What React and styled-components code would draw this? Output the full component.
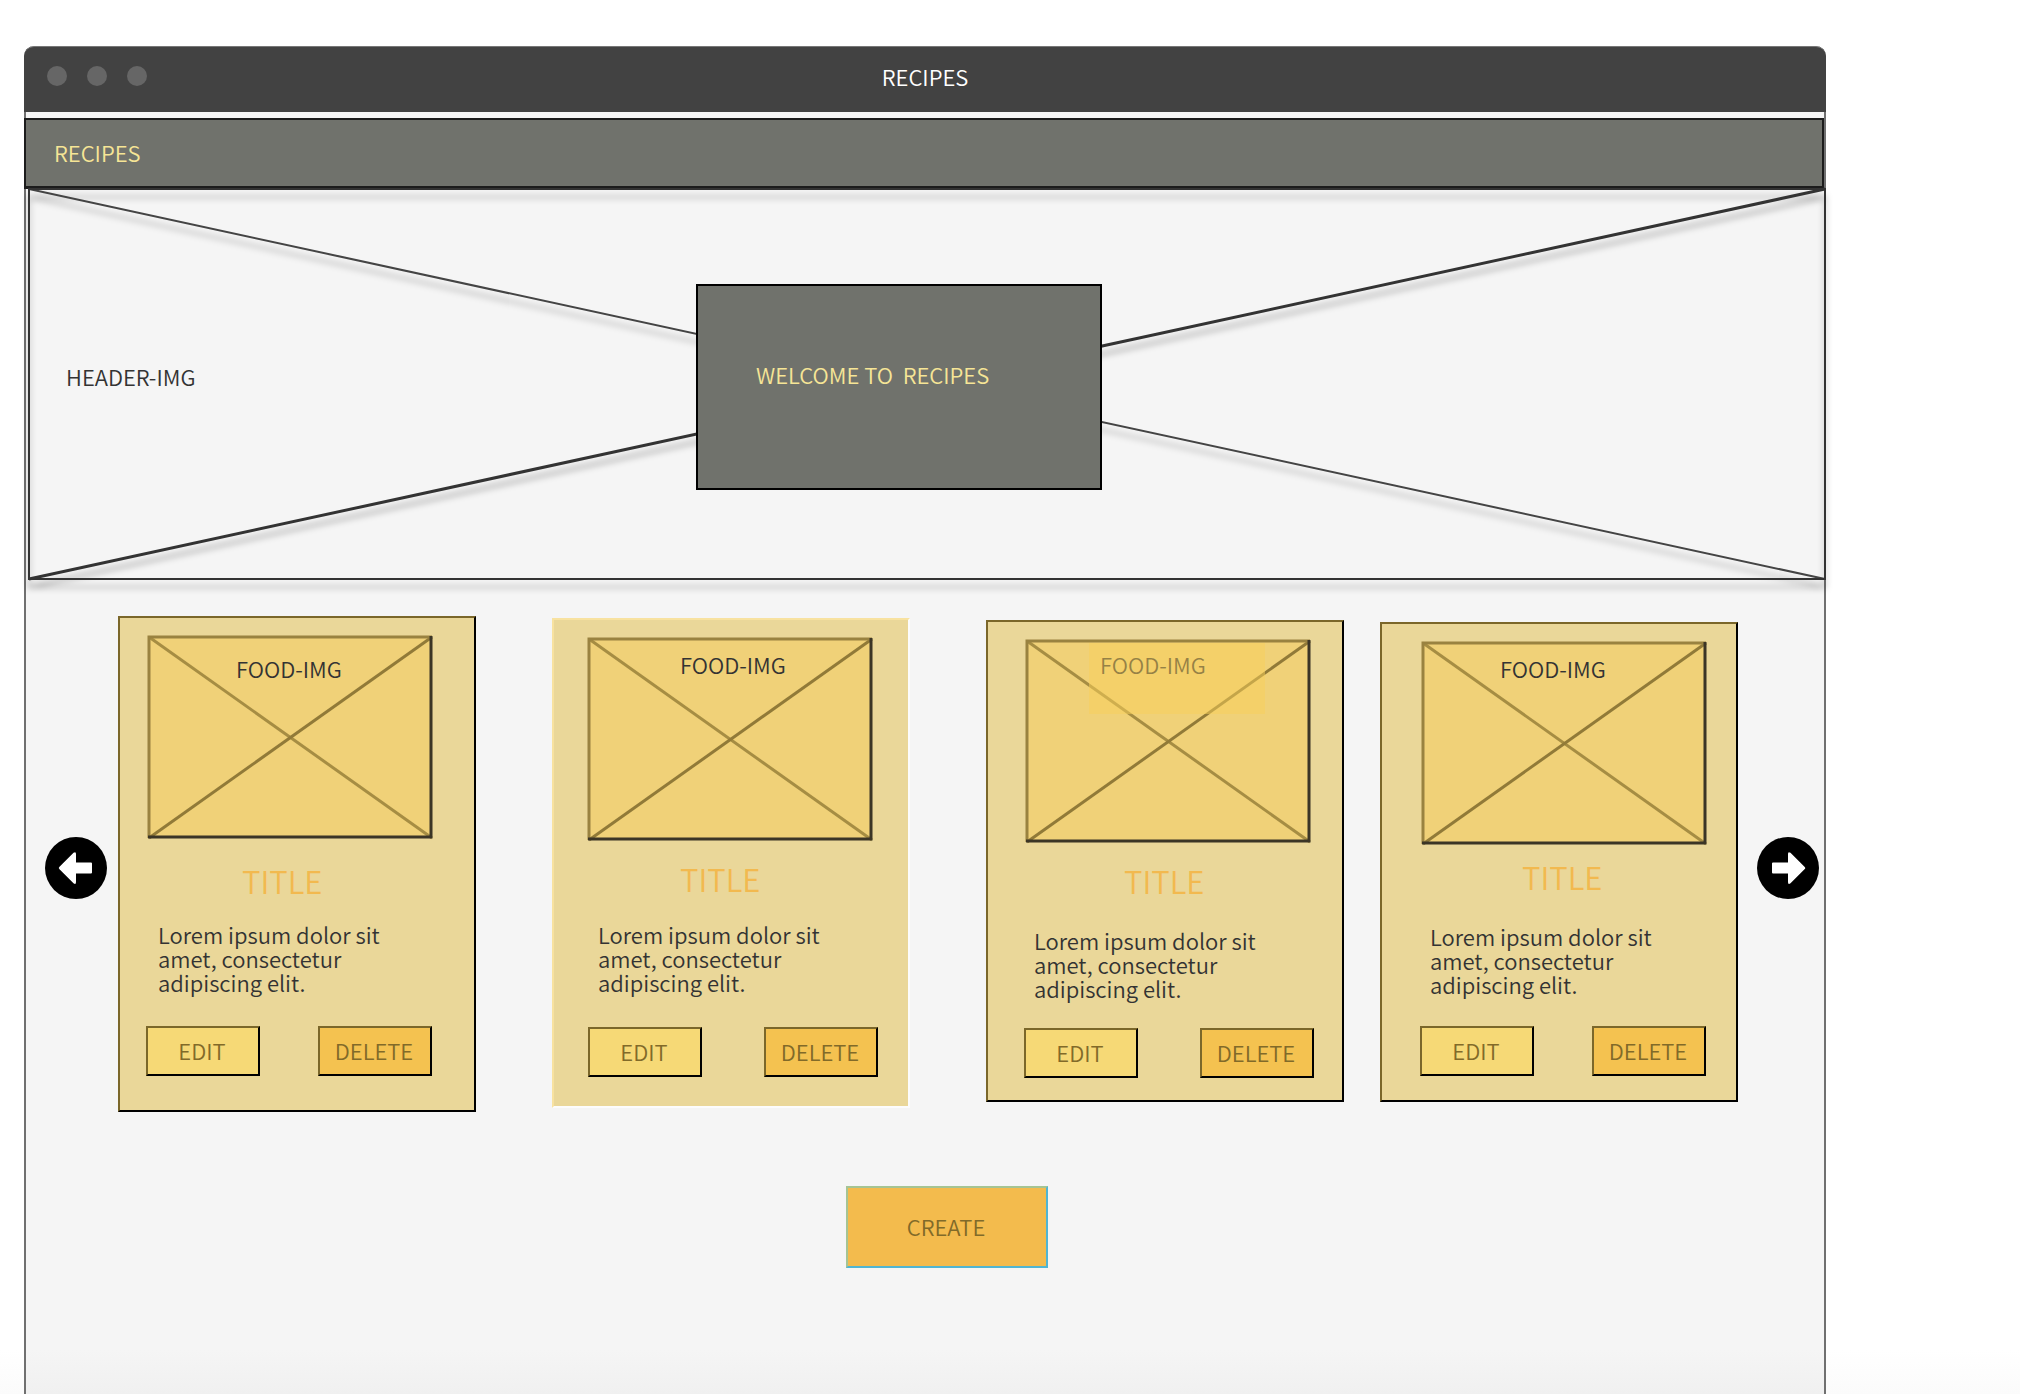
import React from "react";
import styled, { createGlobalStyle } from "styled-components";

const Global = createGlobalStyle`
  * { box-sizing: border-box; }
  body { margin: 0; background: #fff; }
  body, button {
    font-family: "Noto Sans CJK SC", "Noto Sans", sans-serif;
    font-size: 22px;
    font-weight: 350;
    line-height: 24px;
    color: #333;
  }
  h1, h3, p, ul, figure { margin: 0; padding: 0; font-weight: 350; }
`;

const Page = styled.div`
  min-height: 100vh;
  padding: 46px 194px 0 24px;
  display: flex;
  overflow: hidden;
  background: linear-gradient(to top, #fbfbfb, #fff 44px);
`;

const Frame = styled.div`
  flex: 1;
  min-width: 0;
  background: linear-gradient(to top, #f0f0f0, #f5f5f5 44px);
  border: 2px solid #707070;
  border-bottom: 0;
  border-top: 0;
  border-radius: 10px 10px 0 0;
`;

const TitleBar = styled.header`
  height: 66px;
  margin: 0 -2px;
  display: grid;
  grid-template-columns: 1fr auto 1fr;
  align-items: center;
  padding: 0 23px 8px;
  background: #424242;
  border-top: 1px solid #777;
  border-radius: 10px 10px 0 0;
`;

const WindowTitle = styled.h1`
  font-size: 22px;
  line-height: 24px;
  color: #fff;
`;

const Dots = styled.div`
  display: flex;
  gap: 20px;
`;

const Dot = styled.span`
  width: 20px;
  height: 20px;
  border-radius: 50%;
  background: #666;
`;

const Nav = styled.nav`
  margin: 6px 0 0 -2px;
  height: 71px;
  padding: 0 28px 2px;
  display: flex;
  align-items: center;
  background: #70726c;
  border: solid #1c1c1c;
  border-width: 2px 2px 3px;
`;

const NavLink = styled.a`
  color: #f6e596;
  text-decoration: none;
`;

const Hero = styled.section`
  position: relative;
  margin: 0 -1px 0 3px;
  height: 390px;
  display: flex;
  align-items: center;
`;

const Cross = styled.svg`
  position: absolute;
  inset: 0;
  width: 100%;
  height: 100%;
  overflow: visible;
  ${(p) => p.$shadow && "filter: drop-shadow(0 8px 3px rgba(0, 0, 0, 0.3));"}
`;

const HeroLabel = styled.p`
  position: relative;
  width: 667px;
  padding: 0 0 16px 37px;
`;

const Welcome = styled.div`
  position: relative;
  width: 406px;
  height: 206px;
  margin-top: 6px;
  padding: 0 58px 26px;
  display: flex;
  align-items: center;
  background: #70726c;
  border: 2px solid #000;
  color: #f6e596;
  white-space: pre;
`;

const Carousel = styled.section`
  display: flex;
  align-items: center;
  padding: 37px 5px 0 19px;
`;

const Arrow = styled.button`
  width: 62px;
  height: 62px;
  flex: none;
  padding: 0;
  border: 0;
  border-radius: 50%;
  background: #000;
  svg { display: block; width: 100%; height: 100%; }
`;

const CardList = styled.ul`
  flex: 1;
  margin: 0 19px 0 11px;
  padding-bottom: 8px;
  display: grid;
  grid-template-columns: 434fr 434fr 394fr 358fr;
  align-items: start;
  list-style: none;
`;

const Card = styled.li`
  width: 358px;
  margin-top: ${(p) => p.$index * 2}px;
  padding: 18px 0 ${(p) => p.$bottom}px ${(p) => p.$inset}px;
  background: #ead799;
  border: 2px solid;
  border-color: ${(p) => (p.$selected ? "#f8e2a0 #fcfcfc #fcfcfc #f8e2a0" : "#7b672a #000 #000 #7b672a")};
`;

const Picture = styled.figure`
  position: relative;
  margin-left: 2px;
  width: 284px;
  height: 202px;
  background: #f0d178;
`;

const Caption = styled.figcaption`
  position: absolute;
  top: ${(p) => p.$top}px;
  left: ${(p) => p.$left}px;
`;

const Veil = styled.div`
  position: absolute;
  top: 3px;
  left: 63px;
  width: 176px;
  height: 71px;
  background: rgba(248, 207, 90, 0.5);
`;

const Title = styled.h3`
  margin-top: ${(p) => p.$top}px;
  padding-left: ${(p) => p.$left}px;
  font-size: 31px;
  line-height: 36px;
  color: #f2b94f;
`;

const Text = styled.p`
  width: 240px;
  margin-top: ${(p) => p.$gap}px;
  padding-left: ${(p) => p.$left}px;
`;

const Actions = styled.div`
  display: flex;
  gap: ${(p) => p.$gap}px;
  margin-top: ${(p) => p.$top}px;
  padding-left: ${(p) => p.$left}px;
`;

const Action = styled.button`
  width: 114px;
  height: 50px;
  padding: 0 2px 2px 0;
  color: #816a29;
  background: ${(p) => (p.$danger ? "#f4c250" : "#f6d976")};
  border: 2px solid;
  border-color: #7b672a #000 #000 #7b672a;
`;

const Footer = styled.div`
  display: flex;
  justify-content: center;
  padding: 66px 0 124px 44px;
`;

const Create = styled.button`
  width: 202px;
  height: 82px;
  padding: 0 2px 2px 0;
  color: #816a29;
  background: #f3bb4d;
  border: 2px solid;
  border-color: #a5c493 #50b5d3 #50b5d3 #a5c493;
`;

const cards = [
  { inset: 26, caption: [20, 88], title: [25, 96], text: [23, 12], actions: [32, 0, 58], bottom: 34 },
  { inset: 32, caption: [14, 92], title: [21, 94], text: [25, 12], actions: [33, 2, 62], bottom: 29, selected: true },
  { inset: 36, caption: [12, 74], title: [21, 100], text: [29, 10], actions: [28, 0, 62], bottom: 22, veiled: true },
  { inset: 38, caption: [14, 78], title: [15, 102], text: [29, 10], actions: [30, 0, 58], bottom: 24 },
];

function FoodCross() {
  return (
    <Cross aria-hidden="true" fill="none" stroke="#917a38" strokeWidth="3">
      <line x1="1" y1="1" x2="100%" y2="100%" stroke="#a68d43" />
      <line x1="1" y1="100%" x2="100%" y2="1" />
      <path d="M1 202V1H284" stroke="#998240" />
      <path d="M283 0V201H0" stroke="#3b3526" />
    </Cross>
  );
}

function ArrowIcon({ flip }) {
  return (
    <svg viewBox="0 0 62 62" aria-hidden="true">
      <path
        transform={flip ? "translate(62 0) scale(-1 1)" : undefined}
        d="M14.500 29.700 28.500 15.800Q31 14 31 17V25.500H46Q47 25.500 47 26.500V35.500Q47 36.500 46 36.500H31V45Q31 48 28.500 46.200L14.500 32.300Q13 31 14.500 29.700Z"
        fill="#fff"
      />
    </svg>
  );
}

function RecipeCard({ card, index }) {
  const [captionTop, captionLeft] = card.caption;
  const [titleTop, titleLeft] = card.title;
  const [textGap, textLeft] = card.text;
  const [actionsTop, actionsLeft, actionsGap] = card.actions;
  return (
    <Card $index={index} $inset={card.inset} $bottom={card.bottom} $selected={card.selected}>
      <Picture>
        <FoodCross />
        <Caption $top={captionTop} $left={captionLeft}>FOOD-IMG</Caption>
        {card.veiled && <Veil />}
      </Picture>
      <Title $top={titleTop} $left={titleLeft}>TITLE</Title>
      <Text $gap={textGap} $left={textLeft}>Lorem ipsum dolor sit amet, consectetur adipiscing elit.</Text>
      <Actions $top={actionsTop} $left={actionsLeft} $gap={actionsGap}>
        <Action type="button">EDIT</Action>
        <Action type="button" $danger>DELETE</Action>
      </Actions>
    </Card>
  );
}

export default function App() {
  return (
    <>
      <Global />
      <Page>
        <Frame>
          <TitleBar>
            <Dots><Dot /><Dot /><Dot /></Dots>
            <WindowTitle>RECIPES</WindowTitle>
          </TitleBar>
          <Nav><NavLink href="#recipes">RECIPES</NavLink></Nav>
          <Hero>
            <Cross $shadow aria-hidden="true" fill="none" stroke="#333" strokeWidth="2">
              <line x1="0" y1="0" x2="100%" y2="100%" stroke="#444" />
              <line x1="0" y1="100%" x2="100%" y2="0" strokeWidth="3" />
              <rect x="0" y="0" width="100%" height="100%" />
            </Cross>
            <HeroLabel>HEADER-IMG</HeroLabel>
            <Welcome>{"WELCOME TO  RECIPES"}</Welcome>
          </Hero>
          <Carousel>
            <Arrow type="button" aria-label="Previous recipes"><ArrowIcon /></Arrow>
            <CardList>
              {cards.map((card, index) => <RecipeCard key={index} card={card} index={index} />)}
            </CardList>
            <Arrow type="button" aria-label="Next recipes"><ArrowIcon flip /></Arrow>
          </Carousel>
          <Footer><Create type="button">CREATE</Create></Footer>
        </Frame>
      </Page>
    </>
  );
}
